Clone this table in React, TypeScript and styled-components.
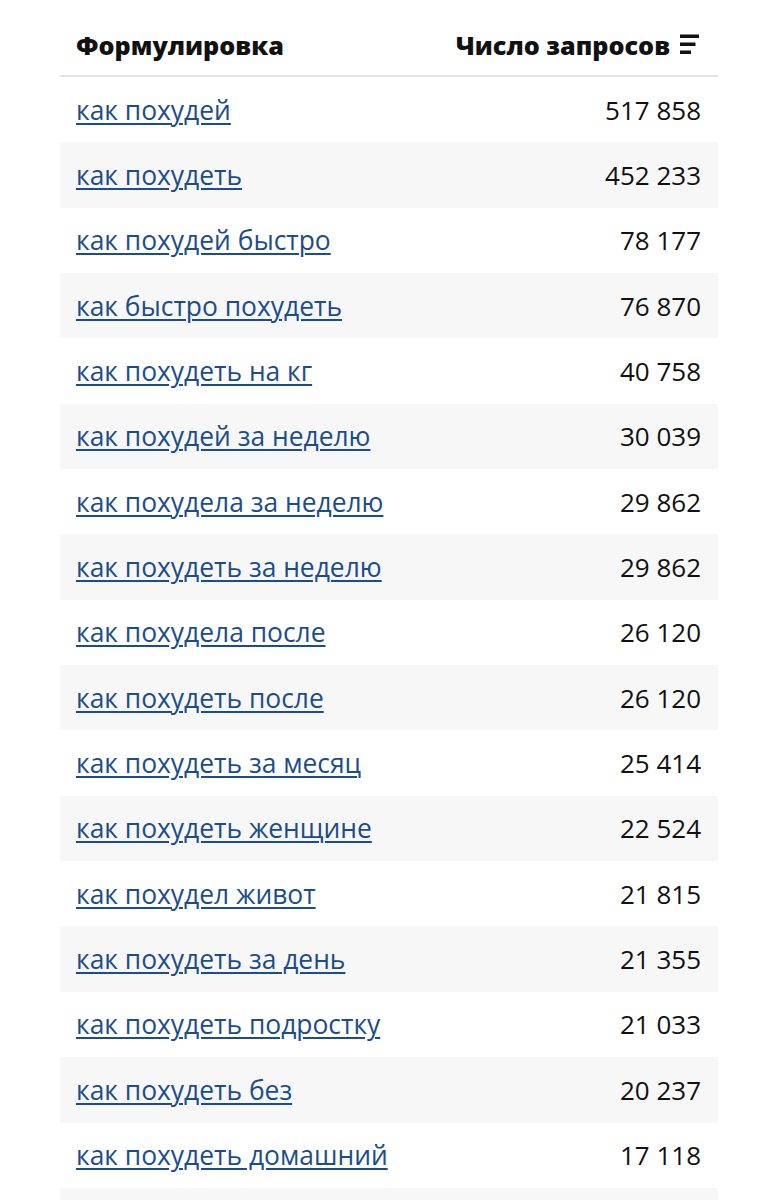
import * as React from "react";
import styled, { createGlobalStyle } from "styled-components";

const GlobalStyle = createGlobalStyle`
  body {
    margin: 0;
    background: #fff;
    font-family: "Open Sans", "Noto Sans", sans-serif;
  }
`;

const STable = styled.div`
  margin: 0 59px 0 60px;
  padding-top: 14px;
`;

const SHead = styled.div`
  display: flex;
  align-items: center;
  justify-content: space-between;
  height: 61px;
  padding: 0 18px 0 16px;
  border-bottom: 2px solid #e3e3e3;
  font-weight: 800;
  font-size: 25.2px;
  color: #111;
`;

const SHeadCell = styled.div`
  display: flex;
  align-items: center;
  gap: 10px;
`;

const SRow = styled.div<{ $shaded: boolean }>`
  display: flex;
  align-items: center;
  justify-content: space-between;
  height: 65.35px;
  padding: 0 17px 0 16px;
  background: ${(p) => (p.$shaded ? "#f7f7f7" : "#fff")};
`;

const SLink = styled.a`
  color: #1b4d8c;
  font-size: 26.4px;
  text-decoration: underline;
  text-decoration-thickness: 2px;
  text-underline-offset: 3px;
`;

const SCount = styled.span`
  color: #111;
  font-size: 26px;
`;

const SortIcon = () => (
  <svg width="20" height="21" viewBox="0 0 20 21">
    <rect x="0" y="0.5" width="19" height="3.5" fill="#111" />
    <rect x="0" y="8.5" width="15.5" height="3.5" fill="#111" />
    <rect x="0" y="16.5" width="11" height="3.5" fill="#111" />
  </svg>
);

const rows: [string, string][] = [
  ["как похудей", "517 858"],
  ["как похудеть", "452 233"],
  ["как похудей быстро", "78 177"],
  ["как быстро похудеть", "76 870"],
  ["как похудеть на кг", "40 758"],
  ["как похудей за неделю", "30 039"],
  ["как похудела за неделю", "29 862"],
  ["как похудеть за неделю", "29 862"],
  ["как похудела после", "26 120"],
  ["как похудеть после", "26 120"],
  ["как похудеть за месяц", "25 414"],
  ["как похудеть женщине", "22 524"],
  ["как похудел живот", "21 815"],
  ["как похудеть за день", "21 355"],
  ["как похудеть подростку", "21 033"],
  ["как похудеть без", "20 237"],
  ["как похудеть домашний", "17 118"],
];

const App = () => (
  <>
    <GlobalStyle />
    <STable>
      <SHead>
        <SHeadCell>Формулировка</SHeadCell>
        <SHeadCell>
          Число запросов
          <SortIcon />
        </SHeadCell>
      </SHead>
      {rows.map(([phrase, count], i) => (
        <SRow key={i} $shaded={i % 2 === 1}>
          <SLink href="#">{phrase}</SLink>
          <SCount>{count}</SCount>
        </SRow>
      ))}
      <SRow $shaded />
    </STable>
  </>
);

export default App;
